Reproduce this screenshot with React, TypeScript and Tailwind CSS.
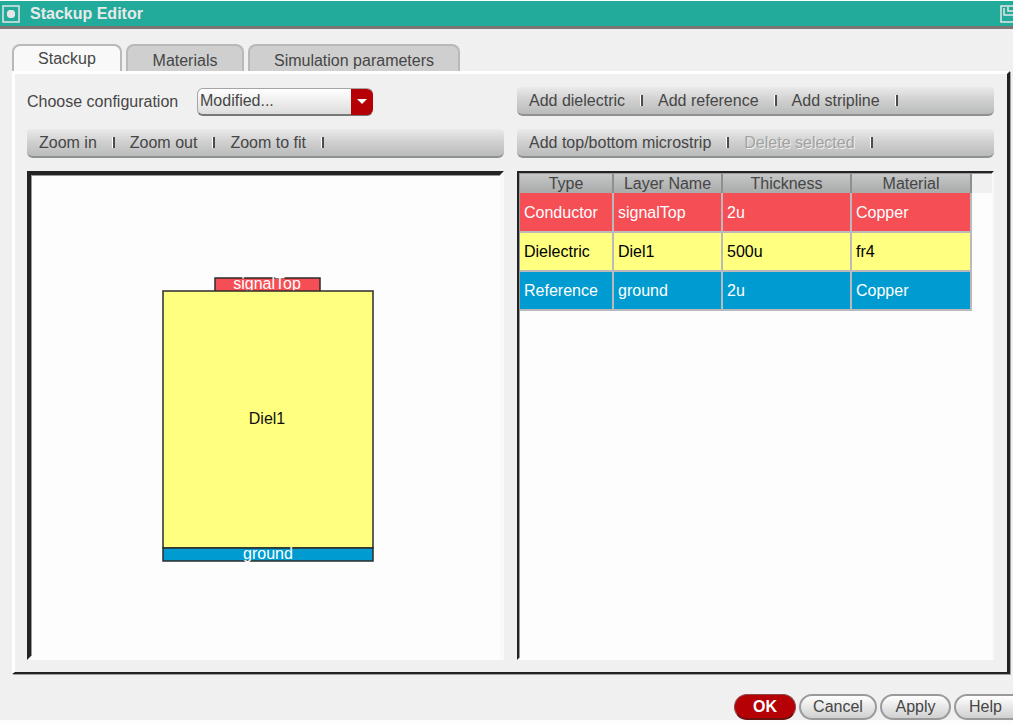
import React from "react";

const layers = [
  { type: "Conductor", name: "signalTop", thickness: "2u", material: "Copper", row: "bg-[#f54e55] text-white" },
  { type: "Dielectric", name: "Diel1", thickness: "500u", material: "fr4", row: "bg-[#ffff80] text-black" },
  { type: "Reference", name: "ground", thickness: "2u", material: "Copper", row: "bg-[#009bd0] text-white" },
];

const tabs = [
  { name: "Stackup", style: "w-[110px]" },
  { name: "Materials", style: "w-[118px] ml-1" },
  { name: "Simulation parameters", style: "w-[212px] ml-1" },
];

function Toolbar({ actions, disabled = [] }: { actions: string[]; disabled?: string[] }) {
  return (
    <div
      role="toolbar"
      className="flex items-center h-[29px] px-3 rounded-md rounded-t-sm border-b-2 border-[#8f9090] bg-linear-to-b from-[#e9eae9] via-[#cfcfcf] to-[#b9bbba]"
    >
      {actions.map((action) => (
        <React.Fragment key={action}>
          <button
            disabled={disabled.includes(action)}
            className="whitespace-nowrap text-[#464646] disabled:text-[#a2a2a2] disabled:[text-shadow:1px_1px_0_#f2f2f2]"
          >
            {action}
          </button>
          <span className="w-[3px] h-[11px] ml-[15px] mr-[15px] shrink-0 bg-[#4c4c4c] border-l border-white" />
        </React.Fragment>
      ))}
    </div>
  );
}

function StackupDrawing() {
  return (
    <svg
      width="212"
      height="286"
      viewBox="0 0 212 286"
      role="img"
      aria-label="Layer stackup"
      fontSize="16"
      textAnchor="middle"
      className="overflow-visible"
    >
      <rect x="53" y="1" width="105" height="14" fill="#f54e55" stroke="#2c2c2c" strokeWidth="1.5" />
      <text x="105" y="12" fill="#fff">signalTop</text>
      <rect x="1" y="14" width="210" height="257" fill="#ffff80" stroke="#2c2c2c" strokeWidth="1.5" />
      <text x="105" y="147" fill="#111">Diel1</text>
      <rect x="1" y="271" width="210" height="13" fill="#009bd0" stroke="#2c2c2c" strokeWidth="1.5" />
      <text x="106" y="282" fill="#fff">ground</text>
    </svg>
  );
}

export default function App() {
  const [activeTab, setActiveTab] = React.useState("Stackup");

  return (
    <div className="min-h-screen flex flex-col overflow-hidden bg-[#f1f0f1] border-y border-b-4 border-[#fdfdfd] font-['Liberation_Sans',Arial,sans-serif] text-base leading-5 text-[#464646]">
      {/* Title bar */}
      <header className="flex items-center h-7 shrink-0 bg-[#22ab9a] border-b-3 border-[#7d7474] overflow-hidden">
        <button aria-label="Window menu" className="ml-[2px] mt-px text-[#e6e6e6]">
          <svg width="18" height="18" viewBox="0 0 18 18" fill="none" stroke="currentColor">
            <rect x="1" y="1" width="16" height="16" strokeWidth="1.5" />
            <path d="M7 5h4l2 2v4l-2 2H7l-2-2V7z" fill="currentColor" stroke="none" />
          </svg>
        </button>
        <h1 className="ml-[10px] font-bold text-[#e9e9e9]">Stackup Editor</h1>
        <button aria-label="Maximize" className="ml-auto -mr-[5px] mt-px text-[#e6e6e6]">
          <svg width="18" height="18" viewBox="0 0 18 18" fill="none" stroke="currentColor" strokeWidth="1.5">
            <rect x="1" y="1" width="16" height="16" />
            <path d="M4 3v7h9M8 2v4h5" />
          </svg>
        </button>
      </header>

      <main className="flex-1 flex flex-col pt-[15px] pl-3 pr-[3px]">
        <div role="tablist" className="flex items-end h-[27px]">
          {tabs.map((tab) => (
            <button
              key={tab.name}
              role="tab"
              aria-selected={tab.name === activeTab}
              onClick={() => setActiveTab(tab.name)}
              className={`h-[27px] rounded-t-lg border-2 border-b-0 border-[#b9b9b9] ${tab.style} ${
                tab.name === activeTab ? "pt-px bg-[#f9f9f9]" : "pt-1 bg-[#cfcfcf]"
              }`}
            >
              {tab.name}
            </button>
          ))}
        </div>

        <section
          role="tabpanel"
          className="flex-1 grid grid-cols-2 gap-x-[13px] grid-rows-[29px_29px_1fr] gap-y-[13px] pt-[13px] pl-3 pr-[13px] pb-3 border-t-3 border-l-3 border-white border-r-3 border-r-[#222] border-b-2 border-b-[#222] shadow-[1px_1px_0_#a0a0a0]"
        >
          <div className="flex items-center">
            <label htmlFor="configuration" className="whitespace-nowrap">
              Choose configuration
            </label>
            <div className="relative ml-auto mr-[131px] w-[176px]">
              <select
                id="configuration"
                className="appearance-none w-full h-7 pl-[2px] pr-6 rounded-md border border-[#a5a5a5] border-b-2 border-b-[#777] bg-linear-to-b from-white to-[#dcdddc]"
              >
                <option>Modified...</option>
              </select>
              <span className="absolute right-0 top-px h-[26px] w-[22px] rounded-r-md bg-[#b50005] flex items-center justify-center pointer-events-none">
                <svg width="10" height="5" viewBox="0 0 10 5" fill="#fff">
                  <path d="M0 0h10L5 5z" />
                </svg>
              </span>
            </div>
          </div>
          <Toolbar actions={["Add dielectric", "Add reference", "Add stripline"]} />
          <Toolbar actions={["Zoom in", "Zoom out", "Zoom to fit"]} />
          <Toolbar actions={["Add top/bottom microstrip", "Delete selected"]} disabled={["Delete selected"]} />

          {/* Layer preview */}
          <div className="flex items-center justify-center pt-2 pl-1 bg-[#fdfdfd] border-4 border-[#242426] border-r-[#f9f9f9] border-b-[#fdfdfd] shadow-[inset_1px_1px_0_#999]">
            <StackupDrawing />
          </div>

          {/* Layer table */}
          <div className="bg-[#fdfdfd] border-2 border-[#242426] border-r-[#f9f9f9] border-b-[#fdfdfd] shadow-[inset_1px_1px_0_#999] pt-px pl-px">
            <div className="bg-linear-to-r from-[#f1f0f1] to-[#f1f0f1] bg-size-[100%_19px] bg-no-repeat">
              <table className="w-[452px] max-w-full table-fixed border-collapse text-left">
                <colgroup>
                  <col className="w-[93px]" />
                  <col className="w-[109px]" />
                  <col className="w-[129px]" />
                  <col />
                </colgroup>
                <thead>
                  <tr className="h-[19px] bg-linear-to-b from-[#c6c7c7] to-[#a9aaaa]">
                    {["Type", "Layer Name", "Thickness", "Material"].map((heading) => (
                      <th key={heading} className="p-0 text-center font-normal leading-[18px] whitespace-nowrap border-r-2 border-[#8f8f8f]">
                        {heading}
                      </th>
                    ))}
                  </tr>
                </thead>
                <tbody>
                  {layers.map((layer) => (
                    <tr key={layer.name} className={`h-[39px] ${layer.row}`}>
                      <td className="p-0 pt-px pl-1 border-r-2 border-b-2 border-[#bbb9bb]">{layer.type}</td>
                      <td className="p-0 pt-px pl-1 border-r-2 border-b-2 border-[#bbb9bb]">{layer.name}</td>
                      <td className="p-0 pt-px pl-1 border-r-2 border-b-2 border-[#bbb9bb]">{layer.thickness}</td>
                      <td className="p-0 pt-px pl-1 border-r-2 border-b-2 border-[#bbb9bb]">{layer.material}</td>
                    </tr>
                  ))}
                </tbody>
              </table>
            </div>
          </div>
        </section>
      </main>

      <footer className="flex justify-end gap-[3px] pt-5 -mr-3">
        <button className="w-[62px] h-[26px] rounded-full border border-[#8d4a4a] border-b-2 border-b-[#6c1010] bg-[#b50005] font-bold text-white">
          OK
        </button>
        <button className="w-[78px] h-[26px] rounded-full border-2 border-[#9a9a9a] bg-linear-to-b from-white to-[#cfd0cf]">Cancel</button>
        <button className="w-[71px] h-[26px] rounded-full border-2 border-[#9a9a9a] bg-linear-to-b from-white to-[#cfd0cf]">Apply</button>
        <button className="w-[71px] h-[26px] pr-2 rounded-full border-2 border-[#9a9a9a] bg-linear-to-b from-white to-[#cfd0cf]">Help</button>
      </footer>
    </div>
  );
}
